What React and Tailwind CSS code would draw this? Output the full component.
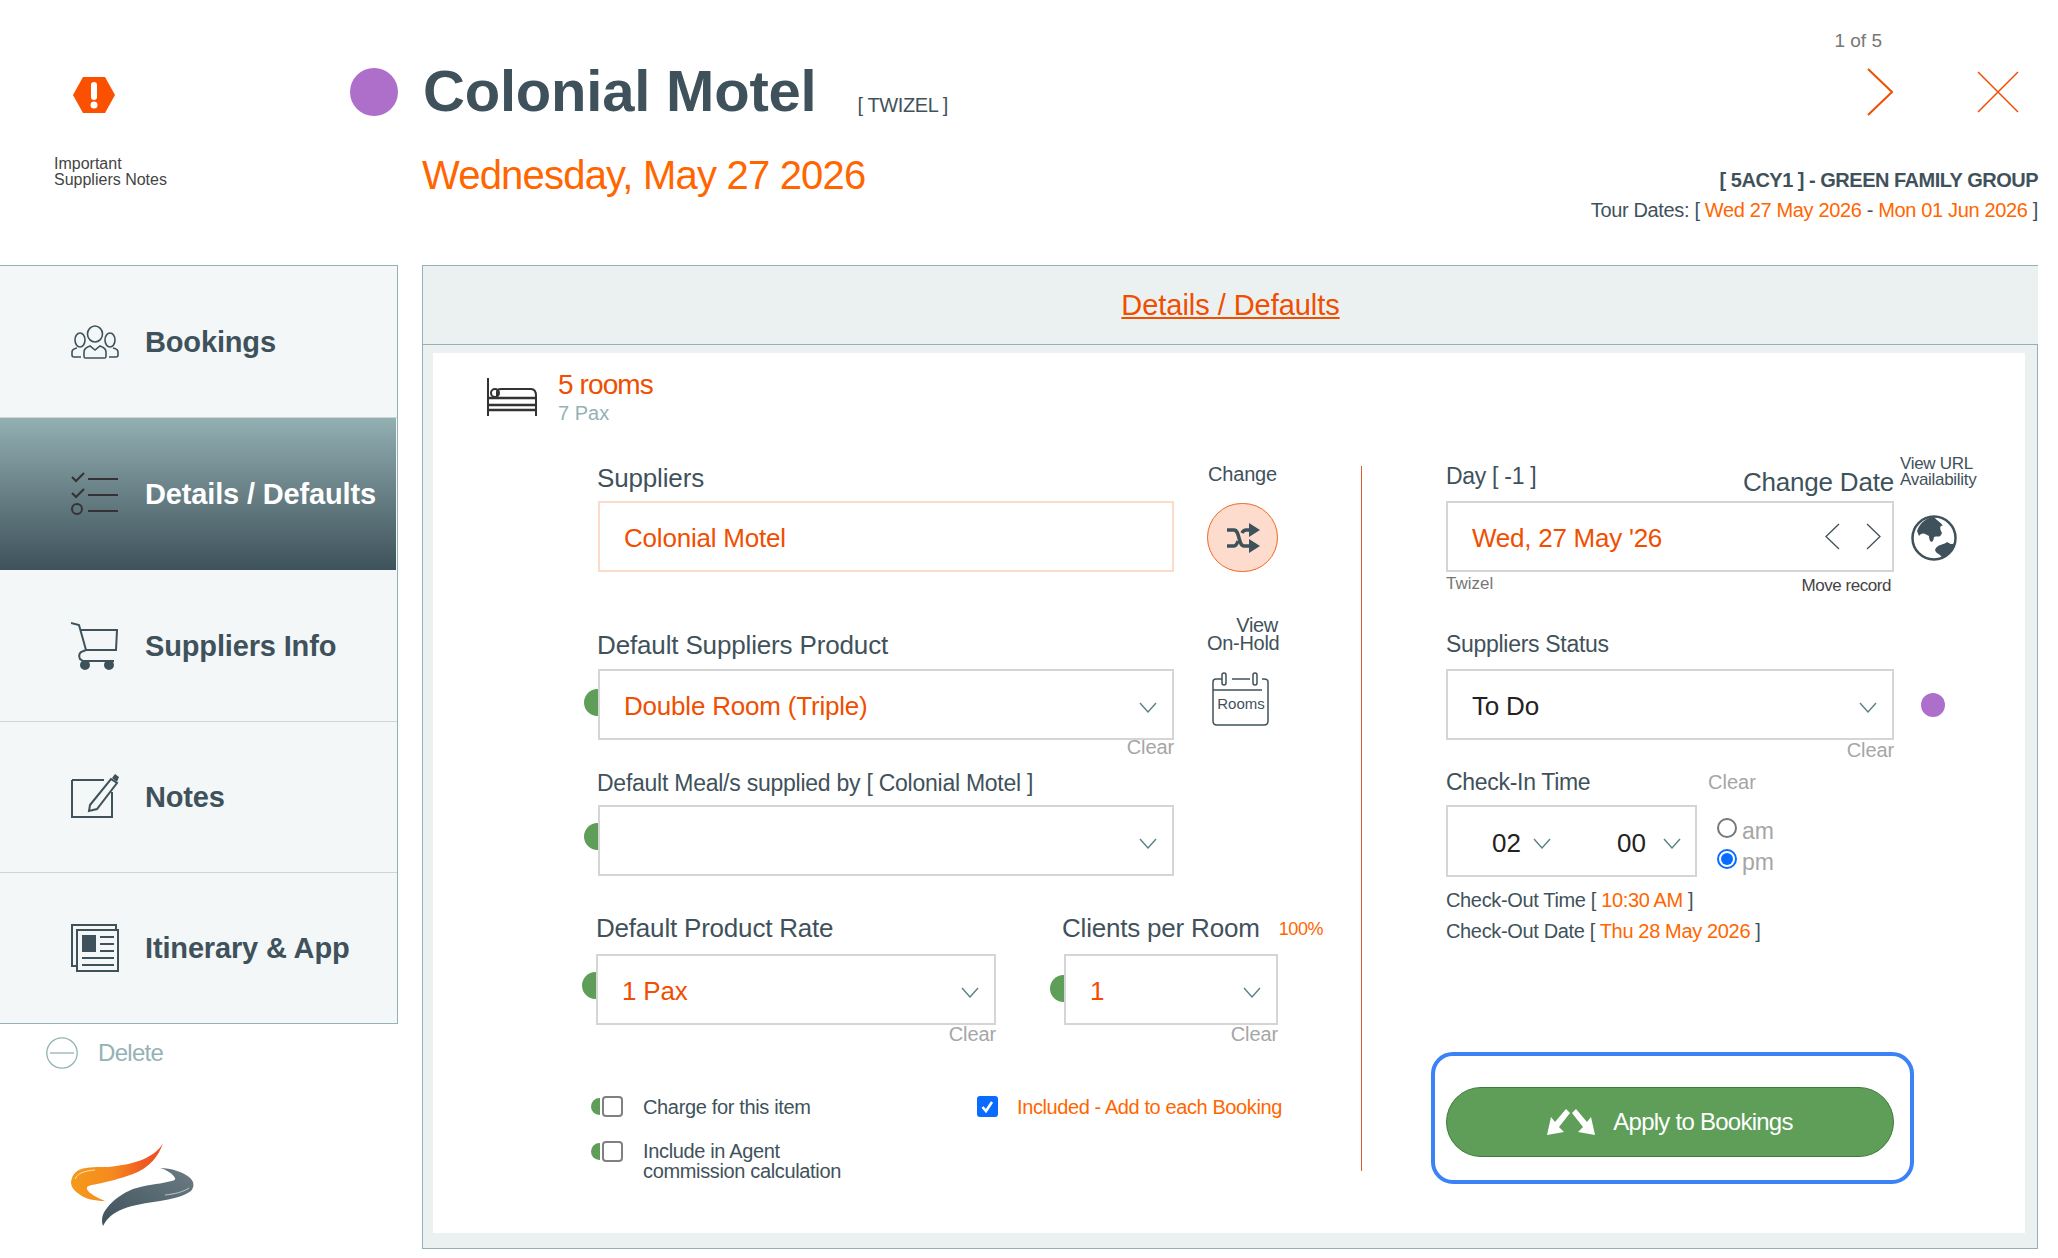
function Dot({ top, left = "-left-[14px]" }) {
  return <span className={`absolute ${left} ${top} w-[27px] h-[27px] rounded-full bg-[#5e9e58]`}></span>;
}

function Clear({ className = "" }) {
  return <p className={`text-[20px] leading-[18px] tracking-[-0.1px] text-[#a6a6a6] text-right ${className}`}>Clear</p>;
}

function Caret({ className = "" }) {
  return (
    <svg className={`shrink-0 ${className}`} width="18" height="11" viewBox="0 0 18 11" fill="none" stroke="#5b8087" strokeWidth="1.4">
      <path d="M1 1 L9 10 L17 1" />
    </svg>
  );
}

function SelectBox({ value, className = "", valueClass = "text-[#f04e00]", dot, dotLeft }) {
  return (
    <div className={`relative ${className}`}>
      {dot && <Dot top={dot} left={dotLeft} />}
      <div className="relative h-[71px] bg-white border-2 border-[#d5d5d5] flex items-center justify-between pl-[24px] pr-[15px]">
        <span className={`text-[26px] tracking-[-0.2px] pt-[4px] ${valueClass}`}>{value}</span>
        <Caret className="mt-[5px]" />
      </div>
    </div>
  );
}

function NavItem({ icon, label, active, last, height }) {
  return (
    <div
      className={`${height} flex items-center pl-[71px] gap-[26px] text-[29px] tracking-[-0.15px] font-bold ${
        active
          ? "bg-gradient-to-b from-[#93b0b3] to-[#3f525b] text-white mr-[1px]"
          : "text-[#3f525b]"
      } ${!active && !last ? "border-b border-[#cfd4d6]" : ""}`}
    >
      <span className="w-[48px] flex justify-center">{icon}</span>
      <span className="pt-[2px]">{label}</span>
    </div>
  );
}

function BookingsIcon() {
  return (
    <svg width="48" height="34" viewBox="0 0 48 34" fill="none" stroke="#3f525b" strokeWidth="1.6">
      <ellipse cx="9" cy="15" rx="5" ry="7" />
      <ellipse cx="24" cy="9" rx="7.5" ry="8" />
      <ellipse cx="39" cy="15" rx="5" ry="7" />
      <path d="M14 33 q-1 0 -1 -2 v-4 q0 -4 6 -6 l5 4 l5 -4 q6 2 6 6 v4 q0 2 -1 2 z" />
      <path d="M10 32 H3 Q1 32 1 30 V27 Q1 24 6 23" />
      <path d="M38 32 H45 Q47 32 47 30 V27 Q47 24 42 23" />
    </svg>
  );
}

function TasksIcon() {
  return (
    <svg width="48" height="46" viewBox="0 0 48 46" fill="none" stroke="#333" strokeWidth="2">
      <path d="M1 6 l4 4 l8 -8" />
      <path d="M1 22 l4 4 l8 -8" />
      <circle cx="6" cy="38" r="5" />
      <path d="M17 8 H47 M17 24 H47 M17 40 H47" />
    </svg>
  );
}

function CartIcon() {
  return (
    <svg width="48" height="48" viewBox="0 0 48 48" fill="none" stroke="#3f525b" strokeWidth="2">
      <path d="M0 1 L8 3 L15 28 H45 L46 8 H10" />
      <path d="M15 28 L10 30 Q7 33 9 37 L12 39 H43" />
      <circle cx="14" cy="43" r="4" fill="#3f525b" />
      <circle cx="38" cy="43" r="4" fill="#3f525b" />
    </svg>
  );
}

function NotesIcon() {
  return (
    <svg className="mb-[3px]" width="48" height="46" viewBox="0 0 48 46" fill="none">
      <path d="M1 7 H33 M1 7 V44 H41 V19" stroke="#3f525b" strokeWidth="2" />
      <path d="M19 32 L40 6 L46 10 L26 36 L18 38 Z" fill="#f3f7f8" stroke="#3f525b" strokeWidth="2" />
      <path d="M41 5 L44 1 L48 4 L46 9 Z" fill="#3f525b" />
    </svg>
  );
}

function ItineraryIcon() {
  return (
    <svg width="48" height="48" viewBox="0 0 48 48" fill="none" stroke="#3f525b" strokeWidth="2">
      <path d="M6 42 H1 V1 H45 V6" />
      <rect x="6" y="6" width="41" height="41" fill="#f3f7f8" />
      <rect x="11" y="11" width="14" height="17" fill="#3f525b" stroke="none" />
      <path d="M29 13 H43 M29 20 H43 M29 27 H43 M11 34 H43 M11 41 H43" />
    </svg>
  );
}

function Logo() {
  return (
    <svg width="124" height="85" viewBox="0 0 124 85">
      <defs>
        <linearGradient id="flame" x1="0" y1="0" x2="1" y2="0">
          <stop offset="0" stopColor="#f59a1b" />
          <stop offset="0.45" stopColor="#f58a1f" />
          <stop offset="0.8" stopColor="#ef5a22" />
          <stop offset="1" stopColor="#ef4e22" />
        </linearGradient>
        <linearGradient id="smoke" x1="0" y1="1" x2="1" y2="0">
          <stop offset="0" stopColor="#3f525b" />
          <stop offset="1" stopColor="#6b7c84" />
        </linearGradient>
      </defs>
      <path d="M92 1 C88 14 78 26 62 32 C48 37 36 40 26 42 C20 43 15 44 16 47 C17 51 27 56 34 59 C24 59 14 57 8 52 C2 48 0 44 0 40 C1 32 6 27 15 26 C25 24 35 26 45 24 C62 22 84 16 92 1 Z" fill="url(#flame)" />
      <path d="M4 37 C7 31 13 29 24 28" fill="none" stroke="#fff" strokeWidth="1" opacity="0.7" />
      <path d="M89 26 C100 26 112 30 118 35 C123 39 124 44 120 49 C112 55 100 57 89 59 C76 61 62 63 52 67 C42 71 36 76 32 84 C30 78 31 72 36 66 C42 58 52 51 62 47 C74 43 88 42 96 40 C102 39 105 38 104 36 C102 32 96 28 89 26 Z" fill="url(#smoke)" />
      <path d="M118 46 C112 50 104 52 94 53" fill="none" stroke="#fff" strokeWidth="1" opacity="0.6" />
    </svg>
  );
}

function Checkbox({ checked }) {
  if (checked) {
    return (
      <span className="w-[21px] h-[21px] rounded-[3px] bg-[#0a6cff] flex items-center justify-center">
        <svg width="15" height="15" viewBox="0 0 15 15" fill="none" stroke="#fff" strokeWidth="2.6">
          <path d="M2.5 8 L6 12 L12 3" />
        </svg>
      </span>
    );
  }
  return <span className="block w-[21px] h-[21px] rounded-[4px] border-2 border-[#808080] bg-white"></span>;
}

function GreenCheck() {
  return (
    <span className="relative block shrink-0">
      <span className="absolute -left-[11px] top-[2px] w-[9px] h-[17px] rounded-l-full bg-[#5e9e58]"></span>
      <Checkbox />
    </span>
  );
}

export default function App() {
  return (
    <div className="w-[2058px] h-[1258px] overflow-hidden bg-white text-[#3f525b] font-['Liberation_Sans',Arial,sans-serif]">
      <header className="h-[265px] flex">
        <div className="w-[350px] pl-[54px] pt-[77px]">
          <svg className="ml-[19px]" width="42" height="36" viewBox="0 0 42 36">
            <polygon points="10,0 32,0 42,18 32,36 10,36 0,18" fill="#fa5000" />
            <rect x="18" y="5" width="6" height="18" rx="3" fill="#fff" />
            <circle cx="21" cy="28" r="3.5" fill="#fff" />
          </svg>
          <p className="mt-[43px] text-[16px] leading-[16px] text-[#444]">
            Important
            <br />
            Suppliers Notes
          </p>
        </div>
        <div className="w-[72px] pt-[68px]">
          <div className="w-[48px] h-[48px] rounded-full bg-[#ae6fcb]"></div>
        </div>
        <div className="w-[1000px] pt-[55px]">
          <div className="flex items-baseline">
            <h1 className="text-[58px] leading-[72px] font-bold pl-[1px] tracking-[-0.2px]">Colonial Motel</h1>
            <span className="ml-[41px] text-[20px] tracking-[-0.4px] translate-y-[1px]">[ TWIZEL ]</span>
          </div>
          <p className="mt-[24px] text-[40px] leading-[48px] tracking-[-0.8px] text-[#ff6600]">Wednesday, May 27 2026</p>
        </div>
        <div className="flex-1 mr-[20px] flex flex-col items-end">
          <div className="w-full flex flex-col items-end pr-[156px] pt-[30px] text-[19px] leading-[22px] text-[#777]">1 of 5</div>
          <div className="mt-[16px] flex items-center">
            <svg width="26" height="48" viewBox="0 0 26 48" fill="none" stroke="#f04e00" strokeWidth="2">
              <path d="M1 1 L25 24 L1 47" />
            </svg>
            <svg className="ml-[84px] mr-[19px]" width="42" height="42" viewBox="0 0 42 42" fill="none" stroke="#f04e00" strokeWidth="1.5">
              <path d="M1 1 L41 41 M41 1 L1 41" />
            </svg>
          </div>
          <p className="mt-[52px] text-[20px] leading-[24px] font-bold tracking-[-0.5px]">[ 5ACY1 ] - GREEN FAMILY GROUP</p>
          <p className="mt-[6px] text-[20px] leading-[24px] tracking-[-0.35px]">
            Tour Dates: [ <span className="text-[#ff6600]">Wed 27 May 2026</span> - <span className="text-[#ff6600]">Mon 01 Jun 2026</span> ]
          </p>
        </div>
      </header>

      <div className="flex items-start">
        <div className="w-[422px] shrink-0">
          <nav className="w-[398px] bg-[#f3f7f8] border-t border-r border-b border-[#94b2b6]">
            <NavItem icon={<BookingsIcon />} label="Bookings" height="h-[152px]" />
            <NavItem icon={<TasksIcon />} label="Details / Defaults" height="h-[152px]" active />
            <NavItem icon={<CartIcon />} label="Suppliers Info" height="h-[152px]" />
            <NavItem icon={<NotesIcon />} label="Notes" height="h-[151px]" />
            <NavItem icon={<ItineraryIcon />} label="Itinerary & App" height="h-[150px]" last />
          </nav>
          <div className="mt-[11px] ml-[46px] flex items-center gap-[20px] text-[24px] tracking-[-0.7px] text-[#94b2b6]">
            <svg width="32" height="32" viewBox="0 0 32 32" fill="none" stroke="#94b2b6" strokeWidth="1.3">
              <circle cx="16" cy="16" r="15.2" />
              <path d="M4 16 H28" />
            </svg>
            <span>Delete</span>
          </div>
          <div className="mt-[71px] ml-[71px]">
            <Logo />
          </div>
        </div>

        <main className="w-[1616px] h-[984px] border border-[#94b2b6] border-r-0 bg-[#ebf1f1] flex flex-col">
          <div className="h-[79px] flex items-center justify-center border-b border-[#94b2b6]">
            <a className="text-[29px] tracking-[-0.05px] pt-[2px] text-[#f04e00] underline">Details / Defaults</a>
          </div>
          <div className="flex-1 pl-[10px] pr-[12px] pt-[8px] pb-[15px] border-r border-[#94b2b6]">
            <div className="h-full bg-white">
              <div className="h-[105px] pl-[54px] flex">
                <svg className="mt-[25px]" width="50" height="38" viewBox="0 0 50 38" fill="none" stroke="#333" strokeWidth="2">
                  <path d="M1 0 V38 M49 18 V38" />
                  <path d="M1 20 H49 M1 27 H49 M1 32 H49" strokeWidth="2.5" />
                  <path d="M10 18 V14 Q10 11 14 11 H44 Q49 11 49 18" />
                  <circle cx="8" cy="15" r="4" />
                </svg>
                <div className="ml-[21px] pt-[16px]">
                  <p className="text-[28px] leading-[32px] tracking-[-0.9px] text-[#f04e00]">5 rooms</p>
                  <p className="text-[20px] leading-[22px] pt-[1px] text-[#94b2b6]">7 Pax</p>
                </div>
              </div>

              <div className="flex pl-[165px]">
                <div className="w-[763px] pt-[7px] shrink-0">
                  <div className="flex">
                    <div className="w-[576px]">
                      <p className="text-[26px] leading-[26px] tracking-[-0.15px] -ml-[1px] mb-[10px]">Suppliers</p>
                      <div className="h-[71px] border-2 border-[#fbdccb] flex items-center pl-[24px] text-[26px] tracking-[-0.2px] text-[#f04e00]">
                        <span className="pt-[4px]">Colonial Motel</span>
                      </div>
                    </div>
                    <div className="ml-[33px] w-[71px]">
                      <p className="-mt-[3px] text-[20px] leading-[24px] tracking-[-0.2px] text-center">Change</p>
                      <div className="mt-[17px] w-[71px] h-[69px] rounded-full bg-[#fddccd] border border-[#f26522] flex items-center justify-center">
                        <svg width="34" height="30" viewBox="0 0 34 30" fill="none" stroke="#3f525b" strokeWidth="3.5">
                          <path d="M1 7 H8 C14 7 12 23 18 23 H24" />
                          <path d="M1 23 H8 C10 23 11 21 12 18 M16 10 C17 8 18 7 20 7 H24" />
                          <path d="M23 0 L34 7 L23 14 Z M23 16 L34 23 L23 30 Z" fill="#3f525b" stroke="none" />
                        </svg>
                      </div>
                    </div>
                  </div>

                  <div className="flex mt-[45px]">
                    <div className="w-[576px] pt-[15px]">
                      <p className="text-[26px] leading-[26px] tracking-[-0.15px] -ml-[1px] mb-[11px]">Default Suppliers Product</p>
                      <SelectBox value="Double Room (Triple)" dot="top-[20px]" />
                      <Clear className="-mt-[2px]" />
                    </div>
                    <div className="ml-[33px] w-[71px]">
                      <p className="-mt-[1px] text-[20px] leading-[18px] tracking-[-0.3px] text-right whitespace-nowrap">
                        View
                        <br />
                        On-Hold
                      </p>
                      <div className="relative mt-[20px] ml-[5px] w-[58px] h-[54px]">
                        <svg width="58" height="54" viewBox="0 0 58 54" fill="none" stroke="#3f525b" strokeWidth="1.5">
                          <path d="M10 7 H4 Q1 7 1 10 V49 Q1 53 5 53 H52 Q56 53 56 49 V10 Q56 7 52 7 H50" />
                          <path d="M20 7 H38 M1 18 H50" />
                          <rect x="10" y="1" width="4" height="12" rx="2" />
                          <rect x="41" y="1" width="4" height="12" rx="2" />
                        </svg>
                        <span className="absolute left-[3px] top-[22px] w-[52px] text-center text-[15px] leading-[20px]">Rooms</span>
                      </div>
                    </div>
                  </div>

                  <p className="mt-[14px] text-[23px] leading-[26px] tracking-[-0.25px] -ml-[1px] mb-[9px]">Default Meal/s supplied by [ Colonial Motel ]</p>
                  <SelectBox value="" className="w-[576px]" dot="top-[18px]" />

                  <div className="flex mt-[39px] -ml-[2px]">
                    <div className="w-[400px]">
                      <p className="text-[26px] leading-[26px] tracking-[-0.2px] mb-[13px]">Default Product Rate</p>
                      <SelectBox value="1 Pax" dot="top-[18px]" />
                      <Clear />
                    </div>
                    <div className="ml-[68px]">
                      <div className="h-[26px] flex items-center -ml-[2px] mb-[13px] whitespace-nowrap">
                        <p className="text-[26px] leading-[26px] tracking-[-0.2px]">Clients per Room</p>
                        <span className="ml-[19px] pt-[2px] text-[18px] leading-[20px] tracking-[-0.4px] text-[#ff6600]">100%</span>
                      </div>
                      <SelectBox value="1" className="w-[214px]" dot="top-[21px]" />
                      <Clear className="w-[214px]" />
                    </div>
                  </div>

                  <div className="mt-[53px] pl-[4px] flex">
                    <div className="w-[375px]">
                      <div className="flex gap-[20px] items-center h-[21px]">
                        <GreenCheck />
                        <span className="text-[20px] tracking-[-0.35px]">Charge for this item</span>
                      </div>
                      <div className="flex gap-[20px] mt-[24px]">
                        <GreenCheck />
                        <span className="text-[20px] leading-[20px] tracking-[-0.35px]">
                          Include in Agent
                          <br />
                          commission calculation
                        </span>
                      </div>
                    </div>
                    <div className="flex gap-[19px] items-center h-[21px] text-[20px] tracking-[-0.4px] text-[#ff6600]">
                      <Checkbox checked />
                      <span className="whitespace-nowrap">Included - Add to each Booking</span>
                    </div>
                  </div>
                </div>

                <div className="w-px h-[705px] mt-[8px] bg-[#e2582a] shrink-0"></div>

                <div className="pl-[84px] pt-[5px]">
                  <div className="flex">
                    <div className="w-[448px]">
                      <div className="h-[38px] flex justify-between">
                        <span className="text-[23px] leading-[26px] tracking-[-0.3px]">Day [ -1 ]</span>
                        <span className="text-[26px] leading-[26px] tracking-[-0.2px] mt-[6px]">Change Date</span>
                      </div>
                      <div className="h-[71px] border-2 border-[#d5d5d5] flex items-center justify-between pl-[24px] pr-[11px]">
                        <span className="text-[26px] tracking-[-0.25px] pt-[4px] text-[#f04e00]">Wed, 27 May '26</span>
                        <span className="flex gap-[26px]">
                          <svg width="15" height="27" viewBox="0 0 15 27" fill="none" stroke="#3f525b" strokeWidth="1.3">
                            <path d="M14 1 L1 13.5 L14 26" />
                          </svg>
                          <svg width="15" height="27" viewBox="0 0 15 27" fill="none" stroke="#3f525b" strokeWidth="1.3">
                            <path d="M1 1 L14 13.5 L1 26" />
                          </svg>
                        </span>
                      </div>
                      <div className="flex justify-between mt-[2px] h-[20px] text-[17px] leading-[20px]">
                        <span className="text-[#777]">Twizel</span>
                        <span className="pt-[2px] pr-[3px] tracking-[-0.45px] text-[#444]">Move record</span>
                      </div>
                    </div>
                    <div className="ml-[6px] -mt-[7px] text-[17px] leading-[16px] tracking-[-0.3px] whitespace-nowrap">
                      View URL
                      <br />
                      Availability
                      <svg className="mt-[27px] ml-[11px]" width="46" height="46" viewBox="0 0 46 46">
                        <circle cx="23" cy="23" r="21.5" fill="#fff" stroke="#3f525b" strokeWidth="2.5" />
                        <path d="M6 16 C9 7 17 2 23 2 C26 6 30 7 32 11 C28 10 29 15 31 18 C29 24 25 20 23 22 C22 30 18 27 18 21 C15 20 12 16 8 21 Z" fill="#3f525b" />
                        <path d="M24 35 C26 29 33 30 36 27 C39 29 42 30 43 28 C42 35 37 41 31 43 C30 39 25 39 24 35 Z" fill="#3f525b" />
                      </svg>
                    </div>
                  </div>

                  <p className="mt-[37px] text-[23px] leading-[26px] tracking-[-0.3px] mb-[12px]">Suppliers Status</p>
                  <div className="flex items-center">
                    <SelectBox value="To Do" valueClass="text-[#222]" className="w-[448px]" />
                    <span className="ml-[27px] w-[24px] h-[24px] rounded-full bg-[#ae6fcb]"></span>
                  </div>
                  <Clear className="mt-[1px] w-[448px]" />

                  <div className="mt-[10px] flex text-[23px] leading-[26px] mb-[10px]">
                    <span className="w-[262px] tracking-[-0.3px]">Check-In Time</span>
                    <span className="text-[20px] text-[#a6a6a6]">Clear</span>
                  </div>
                  <div className="flex">
                    <div className="w-[251px] h-[72px] border-2 border-[#d5d5d5] pt-[5px] flex items-center text-[26px] text-[#222]">
                      <span className="ml-[44px]">02</span>
                      <Caret className="ml-[12px]" />
                      <span className="ml-[66px]">00</span>
                      <Caret className="ml-[17px]" />
                    </div>
                    <div className="ml-[20px] pt-[11px] text-[23px] leading-[31px] text-[#a6a6a6]">
                      <div className="flex items-center gap-[5px]">
                        <span className="w-[20px] h-[20px] rounded-full border-2 border-[#777] -mt-[7px]"></span>
                        am
                      </div>
                      <div className="flex items-center gap-[5px]">
                        <span className="w-[20px] h-[20px] rounded-full border-2 border-[#0a6cff] flex items-center justify-center -mt-[7px]">
                          <span className="w-[12px] h-[12px] rounded-full bg-[#0a6cff]"></span>
                        </span>
                        pm
                      </div>
                    </div>
                  </div>
                  <p className="mt-[11px] text-[20px] leading-[22px] tracking-[-0.35px]">
                    Check-Out Time [ <span className="text-[#ff6600]">10:30 AM</span> ]
                  </p>
                  <p className="mt-[9px] text-[20px] leading-[22px] tracking-[-0.35px]">
                    Check-Out Date [ <span className="text-[#ff6600]">Thu 28 May 2026</span> ]
                  </p>

                  <div className="mt-[110px] -ml-[15px] w-[483px] h-[132px] border-4 border-[#3b82f6] rounded-[22px] pl-[11px] pt-[31px]">
                    <button className="w-[448px] h-[70px] rounded-full bg-[#5e9e58] border border-[#3f7a3a] flex items-center justify-center gap-[18px] text-[24px] tracking-[-0.75px] text-white">
                      <svg width="48" height="26" viewBox="0 0 48 26" fill="#fff">
                        <path d="M0 26 L4 8 L8 13 L19 0 L23 4 L12 18 L17 23 Z" />
                        <path d="M48 26 L44 8 L40 13 L29 0 L25 4 L36 18 L31 23 Z" />
                      </svg>
                      Apply to Bookings
                    </button>
                  </div>
                </div>
              </div>
            </div>
          </div>
        </main>
      </div>
    </div>
  );
}
